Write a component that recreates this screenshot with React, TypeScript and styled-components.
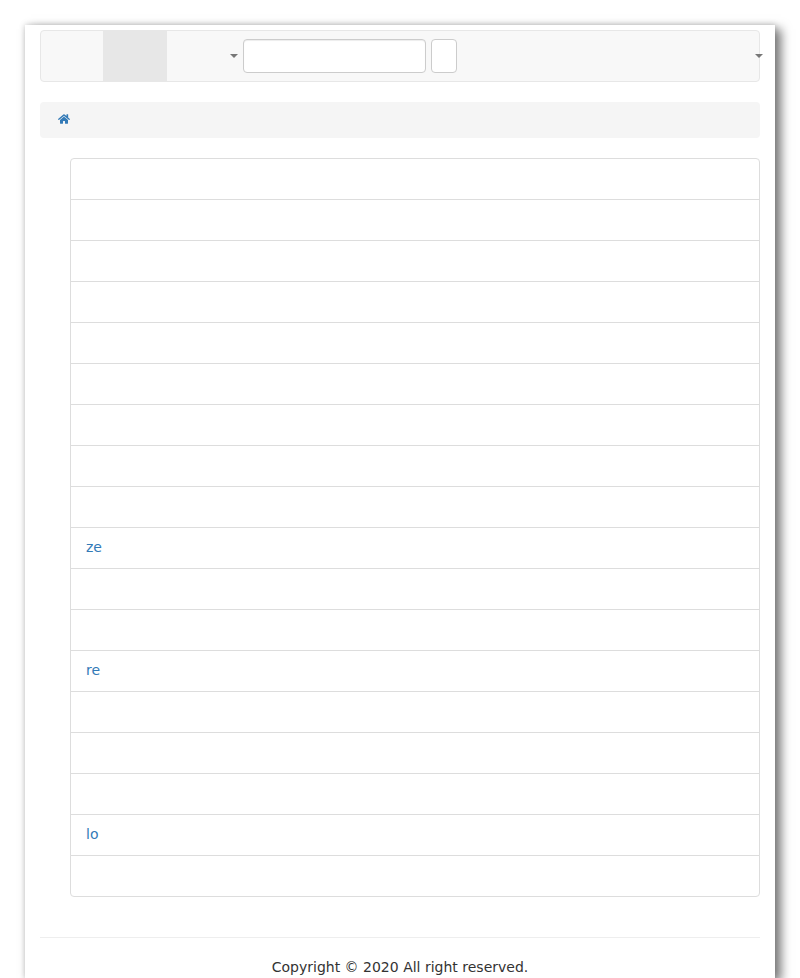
import React from "react";
import styled, { createGlobalStyle } from "styled-components";
import { FaHome } from "react-icons/fa";

const Global = createGlobalStyle`
  html, body { margin: 0; padding: 0; background: #fff; }
  body { font-family: "DejaVu Sans", sans-serif; font-size: 14px; line-height: 20px; color: #333; }
  * { box-sizing: border-box; }
`;

const Page = styled.div`
  width: 750px;
  height: 953px;
  margin: 25px auto 0;
  padding: 5px 15px 0;
  background: #fff;
  box-shadow: 6px 4px 10px #777, 0 0 6px #ccc;
`;

const Navbar = styled.nav`
  display: flex;
  align-items: stretch;
  height: 52px;
  margin-bottom: 20px;
  padding-left: 62px;
  background: #f8f8f8;
  border: 1px solid #e7e7e7;
  border-radius: 4px;
`;

const NavItem = styled.div<{ $active?: boolean; $width: number }>`
  display: flex;
  align-items: center;
  justify-content: flex-end;
  flex: 0 0 ${(p) => p.$width}px;
  background: ${(p) => (p.$active ? "#e7e7e7" : "transparent")};
`;

const Caret = styled.span`
  display: block;
  width: 0;
  height: 0;
  margin-right: 5px;
  border-top: 4px solid #777;
  border-left: 4px solid transparent;
  border-right: 4px solid transparent;
`;

const SearchForm = styled.form`
  display: flex;
  align-items: center;
  gap: 5px;
  margin: 0;
`;

const SearchInput = styled.input`
  width: 183px;
  height: 34px;
  padding: 6px 12px;
  background: #fff;
  border: 1px solid #ccc;
  border-radius: 4px;
  box-shadow: inset 0 1px 1px rgba(0, 0, 0, 0.075);
  font: inherit;
`;

const SearchButton = styled.button`
  width: 26px;
  height: 34px;
  padding: 0;
  background: #fff;
  border: 1px solid #ccc;
  border-radius: 4px;
`;

const NavEnd = styled.div`
  display: flex;
  align-items: center;
  justify-content: flex-end;
  flex: 1;
  margin-right: -9px;
`;

const Breadcrumb = styled.div`
  display: flex;
  align-items: center;
  height: 36px;
  margin-bottom: 20px;
  padding: 0 18px 2px;
  background: #f5f5f5;
  border-radius: 4px;
`;

const HomeIcon = styled(FaHome)`
  display: block;
  width: 12px;
  height: 12px;
  color: #337ab7;
`;

const List = styled.div`
  display: flex;
  flex-direction: column;
  margin: 0 0 20px 30px;
`;

const Row = styled.div`
  height: 42px;
  margin-bottom: -1px;
  padding: 9px 15px 11px;
  background: #fff;
  border: 1px solid #ddd;
  &:first-child { border-radius: 4px 4px 0 0; }
  &:last-child { margin-bottom: 0; border-radius: 0 0 4px 4px; }
`;

const RowLink = styled.a`
  color: #337ab7;
  text-decoration: none;
`;

const Rule = styled.hr`
  height: 0;
  margin: 40px 0 19px;
  border: 0;
  border-top: 1px solid #eee;
`;

const Copyright = styled.footer`
  text-align: center;
`;

const rows = ["", "", "", "", "", "", "", "", "", "ze", "", "", "re", "", "", "", "lo", ""];

export default function App() {
  return (
    <>
      <Global />
      <Page>
        <Navbar>
          <NavItem $active $width={64} />
          <NavItem $width={76}>
            <Caret />
          </NavItem>
          <SearchForm onSubmit={(e) => e.preventDefault()}>
            <SearchInput type="text" />
            <SearchButton type="button" />
          </SearchForm>
          <NavEnd>
            <Caret />
          </NavEnd>
        </Navbar>
        <Breadcrumb>
          <HomeIcon />
        </Breadcrumb>
        <List>
          {rows.map((text, i) => (
            <Row key={i}>{text && <RowLink href="#">{text}</RowLink>}</Row>
          ))}
        </List>
        <Rule />
        <Copyright>Copyright © 2020 All right reserved.</Copyright>
      </Page>
    </>
  );
}
